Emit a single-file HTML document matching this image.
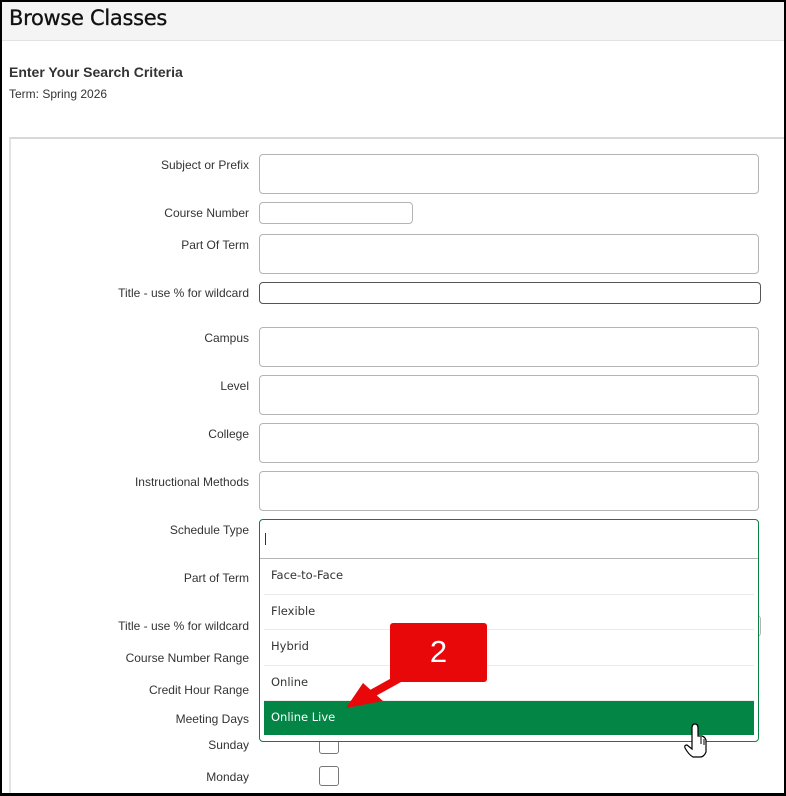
<!DOCTYPE html>
<html><head><meta charset="utf-8"><style>
*{margin:0;padding:0;box-sizing:border-box}
html{width:786px;height:796px;overflow:hidden}
body{width:786px;height:796px;background:#fff;position:relative;overflow:hidden;font-family:"Liberation Sans",Arial,sans-serif;color:#222}
.frame{position:absolute;left:0;top:0;width:786px;height:796px;border:2px solid #000;border-bottom-width:3px;z-index:50;pointer-events:none}
.hdr{position:absolute;left:0;top:0;width:786px;height:41px;background:#f4f4f4;border-bottom:1px solid #e2e2e2}
.hdr h1{position:absolute;left:9px;top:6px;font-family:"DejaVu Sans","Liberation Sans",sans-serif;font-weight:normal;font-size:21px;color:#111;letter-spacing:-0.3px;-webkit-text-stroke:0.3px #111}
.h2{position:absolute;left:9px;top:64px;font-size:14px;font-weight:bold;color:#333}
.term{position:absolute;left:9px;top:87px;font-size:12px;color:#333}
.panel{position:absolute;left:9px;top:137px;width:780px;height:659px;border-top:2px solid #d8d8d8;border-left:2px solid #e4e4e4}
.lbl{position:absolute;right:537px;font-size:12px;color:#333;white-space:nowrap}
.in{position:absolute;left:259px;width:500px;height:40px;border:1px solid #b5b5b5;border-radius:4px;background:#fff}
.cb{position:absolute;left:319px;width:20px;height:20px;border:1px solid #777;border-radius:3px;background:#fff}
.dd{position:absolute;left:259px;top:519px;width:500px;height:223px;border:1px solid #0a8043;border-radius:4px;background:#fff;z-index:5}
.dd .top{height:39px;border-bottom:1px solid #b5b5b5;position:relative}
.dd .top i{position:absolute;left:5px;top:13px;width:1px;height:12px;background:#333}
.opt{margin:0 4px;height:35.5px;border-bottom:1px solid #ececec;font-family:"DejaVu Sans",sans-serif;font-size:11.5px;color:#333;padding:9px 0 0 7px}
.opt.sel{background:#038545;color:#fff;border:none;height:34px}
</style></head><body>
<div class="hdr"><h1>Browse Classes</h1></div>
<div class="h2">Enter Your Search Criteria</div>
<div class="term">Term: Spring 2026</div>
<div class="panel"></div>

<div class="lbl" style="top:158px">Subject or Prefix</div>
<div class="in" style="top:154px"></div>
<div class="lbl" style="top:206px">Course Number</div>
<div class="in" style="top:202px;width:154px;height:22px"></div>
<div class="lbl" style="top:238px">Part Of Term</div>
<div class="in" style="top:234px"></div>
<div class="lbl" style="top:286px">Title - use % for wildcard</div>
<div class="in" style="top:282px;width:502px;height:22px;border-color:#555"></div>
<div class="lbl" style="top:331px">Campus</div>
<div class="in" style="top:327px"></div>
<div class="lbl" style="top:379px">Level</div>
<div class="in" style="top:375px"></div>
<div class="lbl" style="top:427px">College</div>
<div class="in" style="top:423px"></div>
<div class="lbl" style="top:475px">Instructional Methods</div>
<div class="in" style="top:471px"></div>
<div class="lbl" style="top:523px">Schedule Type</div>
<div class="lbl" style="top:571px">Part of Term</div>
<div class="lbl" style="top:619px">Title - use % for wildcard</div>
<div class="in" style="top:615px;width:502px;height:22px"></div>
<div class="lbl" style="top:651px">Course Number Range</div>
<div class="lbl" style="top:683px">Credit Hour Range</div>
<div class="lbl" style="top:712px">Meeting Days</div>
<div class="lbl" style="top:738px">Sunday</div>
<div class="cb" style="top:734px"></div>
<div class="lbl" style="top:770px">Monday</div>
<div class="cb" style="top:766px"></div>

<div class="dd">
<div class="top"><i></i></div>
<div class="opt">Face-to-Face</div>
<div class="opt">Flexible</div>
<div class="opt">Hybrid</div>
<div class="opt">Online</div>
<div class="opt sel">Online Live</div>
</div>

<div style="position:absolute;left:390px;top:623px;width:97px;height:59px;background:#e8080a;border-radius:3px;z-index:10;color:#fff;font-size:31px;text-align:center;line-height:58px">2</div>
<svg style="position:absolute;left:0;top:0;z-index:11" width="786" height="796">
<path d="M400 678 L362 699" stroke="#e8080a" stroke-width="8" fill="none"/>
<path d="M346 708 L363 683 L383 701 Z" fill="#e8080a"/>
<path d="M692 728 Q692 724 695 724 Q698 724 698 728 L698 736 L702 736 Q705 737 706 740 L706 752 Q704 757 700 757 L693 757 Q689 755 685 748 Q684 745 687 745 L692 749 Z" fill="#fff" stroke="#000" stroke-width="1.2"/>
<path d="M701 737 L701 744 M704 739 L704 745" stroke="#000" stroke-width="1"/>
</svg>
<div class="frame"></div>
</body></html>
